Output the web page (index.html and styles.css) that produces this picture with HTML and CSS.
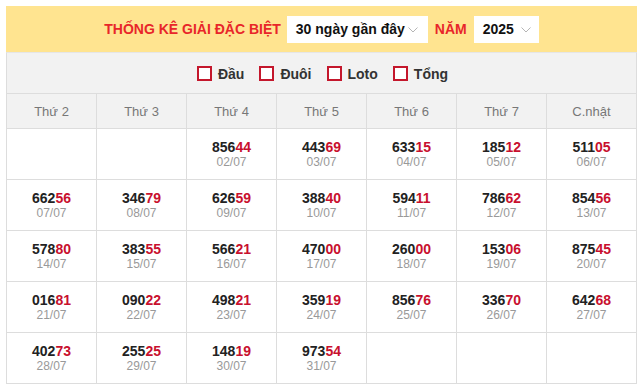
FILE: index.html
```html
<!DOCTYPE html>
<html lang="vi">
<head>
<meta charset="utf-8">
<link rel="stylesheet" href="styles.css">
</head>
<body>
<div class="wrap">
  <div class="head">
    <span class="title">THỐNG KÊ GIẢI ĐẶC BIỆT</span>
    <div class="select sel-days"><span>30 ngày gần đây</span><svg class="chev" width="10" height="6" viewBox="0 0 10 6"><path d="M0.5 0.5l4.5 4.5 4.5-4.5" fill="none" stroke="#b5b5b5" stroke-width="1"/></svg></div>
    <span class="title">NĂM</span>
    <div class="select sel-year"><span>2025</span><svg class="chev" width="10" height="6" viewBox="0 0 10 6"><path d="M0.5 0.5l4.5 4.5 4.5-4.5" fill="none" stroke="#b5b5b5" stroke-width="1"/></svg></div>
  </div>
  <div class="filters">
    <label class="chk"><span class="box"></span>Đầu</label>
    <label class="chk"><span class="box"></span>Đuôi</label>
    <label class="chk"><span class="box"></span>Loto</label>
    <label class="chk"><span class="box"></span>Tổng</label>
  </div>
  <table class="cal">
    <thead>
      <tr><th>Thứ 2</th><th>Thứ 3</th><th>Thứ 4</th><th>Thứ 5</th><th>Thứ 6</th><th>Thứ 7</th><th>C.nhật</th></tr>
    </thead>
    <tbody>
      <tr>
        <td></td><td></td>
        <td><div class="num">856<b>44</b></div><div class="date">02/07</div></td>
        <td><div class="num">443<b>69</b></div><div class="date">03/07</div></td>
        <td><div class="num">633<b>15</b></div><div class="date">04/07</div></td>
        <td><div class="num">185<b>12</b></div><div class="date">05/07</div></td>
        <td><div class="num">511<b>05</b></div><div class="date">06/07</div></td>
      </tr>
      <tr>
        <td><div class="num">662<b>56</b></div><div class="date">07/07</div></td>
        <td><div class="num">346<b>79</b></div><div class="date">08/07</div></td>
        <td><div class="num">626<b>59</b></div><div class="date">09/07</div></td>
        <td><div class="num">388<b>40</b></div><div class="date">10/07</div></td>
        <td><div class="num">594<b>11</b></div><div class="date">11/07</div></td>
        <td><div class="num">786<b>62</b></div><div class="date">12/07</div></td>
        <td><div class="num">854<b>56</b></div><div class="date">13/07</div></td>
      </tr>
      <tr>
        <td><div class="num">578<b>80</b></div><div class="date">14/07</div></td>
        <td><div class="num">383<b>55</b></div><div class="date">15/07</div></td>
        <td><div class="num">566<b>21</b></div><div class="date">16/07</div></td>
        <td><div class="num">470<b>00</b></div><div class="date">17/07</div></td>
        <td><div class="num">260<b>00</b></div><div class="date">18/07</div></td>
        <td><div class="num">153<b>06</b></div><div class="date">19/07</div></td>
        <td><div class="num">875<b>45</b></div><div class="date">20/07</div></td>
      </tr>
      <tr>
        <td><div class="num">016<b>81</b></div><div class="date">21/07</div></td>
        <td><div class="num">090<b>22</b></div><div class="date">22/07</div></td>
        <td><div class="num">498<b>21</b></div><div class="date">23/07</div></td>
        <td><div class="num">359<b>19</b></div><div class="date">24/07</div></td>
        <td><div class="num">856<b>76</b></div><div class="date">25/07</div></td>
        <td><div class="num">336<b>70</b></div><div class="date">26/07</div></td>
        <td><div class="num">642<b>68</b></div><div class="date">27/07</div></td>
      </tr>
      <tr>
        <td><div class="num">402<b>73</b></div><div class="date">28/07</div></td>
        <td><div class="num">255<b>25</b></div><div class="date">29/07</div></td>
        <td><div class="num">148<b>19</b></div><div class="date">30/07</div></td>
        <td><div class="num">973<b>54</b></div><div class="date">31/07</div></td>
        <td></td><td></td><td></td>
      </tr>
    </tbody>
  </table>
</div>
</body>
</html>
```
FILE: styles.css
```css
* { box-sizing: border-box; }
body {
  margin: 0;
  background: #fff;
  font-family: "Liberation Sans", Arial, sans-serif;
}
.wrap {
  margin: 6px 0 0 6px;
  width: 631px;
}
.head {
  background: #ffe490;
  height: 46px;
  display: flex;
  align-items: center;
  justify-content: center;
  gap: 7px;
  padding-left: 0;
}
.title {
  color: #e8262a;
  font-weight: bold;
  font-size: 14px;
  white-space: nowrap;
}
.select {
  background: #fff;
  height: 27px;
  display: flex;
  align-items: center;
  justify-content: space-between;
  padding: 0 10px 0 10px;
  font-weight: bold;
  font-size: 14px;
  color: #111;
  white-space: nowrap;
  flex-shrink: 0;
}
.sel-days { width: 141px; margin-left: -1px; padding-left: 9px; }
.sel-year { width: 65px; padding-left: 9px; padding-right: 8px; }
.chev { margin-top: 1px; }
.filters {
  background: #f2f2f2;
  border: 1px solid #ddd;
  border-top-color: #e6e6e6;
  border-bottom: none;
  height: 41px;
  display: flex;
  align-items: center;
  justify-content: center;
  gap: 15px;
  padding-top: 1px;
  padding-left: 2px;
}
.chk {
  display: flex;
  align-items: center;
  gap: 6px;
  font-weight: bold;
  font-size: 14px;
  color: #333;
}
.box {
  width: 15px;
  height: 15px;
  border: 2px solid #c4172c;
  background: #fff;
}
.cal {
  width: 631px;
  border-collapse: collapse;
  table-layout: fixed;
}
.cal th, .cal td {
  border: 1px solid #ddd;
  text-align: center;
  padding: 0;
}
.cal th {
  background: #f2f2f2;
  height: 35px;
  font-weight: normal;
  font-size: 13px;
  color: #777;
}
.cal td {
  height: 51px;
  background: #fff;
  vertical-align: middle;
}
.num {
  font-weight: bold;
  font-size: 14px;
  color: #222;
  line-height: 16px;
}
.num b { color: #c8102e; }
.date {
  font-size: 12px;
  color: #999;
  line-height: 14px;
}
```
